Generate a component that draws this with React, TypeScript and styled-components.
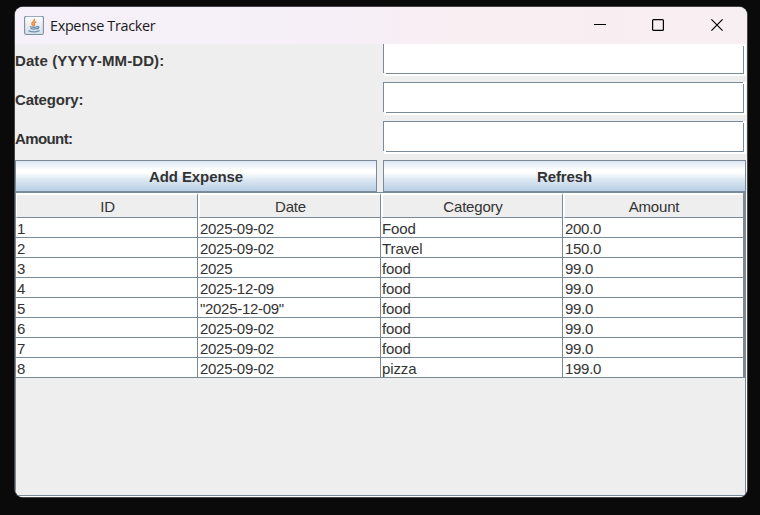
import React from "react";
import styled, { createGlobalStyle } from "styled-components";

const line = "#7a8a99";
const panel = "#eeeeee";
const ink = "#333333";

const GlobalStyle = createGlobalStyle`
  * { box-sizing: border-box; }
  html, body { margin: 0; background: #0a0a0a; overflow: hidden; }
`;

const Desktop = styled.div`
  width: 760px;
  height: 515px;
  padding: 7px 13px 18px 15px;
  background: #0a0a0a;
`;

const Window = styled.main`
  display: flex;
  flex-direction: column;
  width: 732px;
  height: 490px;
  overflow: hidden;
  border-radius: 8px;
  background: ${panel};
  box-shadow: 0 0 0 1px #454548;
  color: ${ink};
  font: 15px "Liberation Sans", Arial, sans-serif;
`;

const TitleBar = styled.header`
  display: flex;
  align-items: center;
  flex: 0 0 37px;
  padding-left: 9px;
  background: linear-gradient(90deg, #f5f0f9 0%, #f6eff7 45%, #f9eef2 60%, #f8eff3 100%);
`;

const Title = styled.h1`
  flex: 1;
  margin: 0 0 0 6px;
  color: #1a1a1a;
  font: 400 14.4px/20px "Open Sans", "Noto Sans", sans-serif;
  letter-spacing: -0.32px;
`;

const WindowControls = styled.div`
  display: flex;
  align-items: center;
  height: 100%;
`;

const ControlButton = styled.button`
  display: grid;
  place-items: center;
  width: 58px;
  height: 37px;
  padding: 0 0 1px;
  border: 0;
  background: transparent;
  &:last-child { width: 60px; }
`;

const Form = styled.form`
  display: grid;
  grid-template: 32px 33px 33px 32px / 362px 363px;
  gap: 6px;
  flex: none;
`;

const Label = styled.label<{ $first?: boolean; $tracking: number }>`
  padding-top: ${(p) => (p.$first ? 8 : 9)}px;
  font-weight: 700;
  line-height: 18px;
  letter-spacing: ${(p) => p.$tracking}px;
`;

const Field = styled.input<{ $clipped?: boolean }>`
  width: 363px;
  height: 100%;
  padding: 0 6px;
  border: 0;
  border-radius: 0;
  outline: 0;
  font: inherit;
  background:
    linear-gradient(${line}, ${line}) 0 0 / 1px calc(100% - 3px) no-repeat,
    linear-gradient(${line}, ${line}) 0 0 / 360px ${(p) => (p.$clipped ? 0 : 1)}px no-repeat,
    linear-gradient(${line}, ${line}) 3px calc(100% - 2px) / 358px 1px no-repeat,
    linear-gradient(${line}, ${line}) 360px 2px / 1px calc(100% - 4px) no-repeat,
    linear-gradient(${panel}, ${panel}) 0 100% / 1px 3px no-repeat,
    #ffffff;
`;

const ActionButton = styled.button`
  height: 32px;
  padding: 2px 0 0;
  border: 1px solid ${line};
  border-radius: 0;
  background: linear-gradient(#dde8f3 0%, #ffffff 30%, #ffffff 38%, #dde8f3 62%, #b8cfe5 100%);
  color: ${ink};
  font: 700 15px/28px "Liberation Sans", Arial, sans-serif;
  letter-spacing: -0.1px;
`;

const ScrollPane = styled.section`
  display: flex;
  flex-direction: column;
  flex: 1;
  width: 731px;
  margin-bottom: 1px;
  border: 1px solid ${line};
  box-shadow: 1px 1px 0 #ffffff;
`;

const Table = styled.div`
  display: flex;
  flex-direction: column;
  border-right: 2px solid ${line};
`;

const HeaderRow = styled.div`
  display: grid;
  grid-template-columns: 182px 183px 182px 180px;
  grid-template-rows: 100%;
  height: 25px;
`;

const HeaderCell = styled.div<{ $first?: boolean }>`
  border-top: 2px solid #ffffff;
  border-left: ${(p) => (p.$first ? 1 : 2)}px solid #ffffff;
  border-right: 1px solid ${line};
  border-bottom: 1px solid ${line};
  background: ${panel};
  padding-left: 1px;
  text-align: center;
  line-height: 24px;
  letter-spacing: -0.2px;
  &:last-child { border-right: 0; padding-left: 0; }
`;

const Row = styled(HeaderRow)`
  height: 20px;
  background: #ffffff;
`;

const Cell = styled.div<{ $inset: number; $tracking: number }>`
  padding-left: ${(p) => p.$inset}px;
  border-right: 1px solid ${line};
  border-bottom: 1px solid ${line};
  line-height: 22px;
  letter-spacing: ${(p) => p.$tracking}px;
  white-space: nowrap;
  &:last-child { border-right: 0; }
`;

const columns = ["ID", "Date", "Category", "Amount"];
const insets = [1, 2, 1, 2];
const tracking = [0, -0.3, -0.1, -0.3];
const expenses = [
  ["1", "2025-09-02", "Food", "200.0"],
  ["2", "2025-09-02", "Travel", "150.0"],
  ["3", "2025", "food", "99.0"],
  ["4", "2025-12-09", "food", "99.0"],
  ["5", '"2025-12-09"', "food", "99.0"],
  ["6", "2025-09-02", "food", "99.0"],
  ["7", "2025-09-02", "food", "99.0"],
  ["8", "2025-09-02", "pizza", "199.0"],
];

function JavaIcon() {
  return (
    <svg width="20" height="20" viewBox="0 0 20 20">
      <defs>
        <linearGradient id="tile" x2="0" y2="1">
          <stop stopColor="#fefefe" />
          <stop offset="1" stopColor="#d5dde5" />
        </linearGradient>
      </defs>
      <rect x=".6" y=".1" width="18.8" height="18.4" rx="1.8" fill="url(#tile)" stroke="#7890a4" strokeWidth="1.1" />
      <g fill="none" strokeLinecap="round">
        <path d="M10.3 3.4c1 1.8-3 2.7-2.4 4.4.2.8.8 1.1 1.1 1.8M11.8 6c-1.9.8-2.5 1.5-1.6 2.3.4.5.3.9-.1 1.3" stroke="#ea8a3a" strokeWidth="1.5" />
        <path d="M6.3 10.7c1.8.7 4.8.7 6.6 0M6.9 12.5c1.6.7 4 .7 5.4 0M13.3 10.7c2.3-.3 1.9 1.6-.2 2.2" stroke="#5886ad" strokeWidth="1.2" />
        <path d="M5 14.9c2.8 1.1 7.2 1.1 10-.1" stroke="#6e93b3" strokeWidth="1.4" />
      </g>
    </svg>
  );
}

export default function App() {
  return (
    <>
      <GlobalStyle />
      <Desktop>
        <Window>
          <TitleBar>
            <JavaIcon />
            <Title>Expense Tracker</Title>
            <WindowControls>
              <ControlButton aria-label="Minimize">
                <svg width="12" height="12"><path d="M0 5.5h12" stroke="#000" /></svg>
              </ControlButton>
              <ControlButton aria-label="Maximize">
                <svg width="12" height="12"><rect x=".6" y=".6" width="10.8" height="10.8" rx="1" fill="none" stroke="#000" strokeWidth="1.2" /></svg>
              </ControlButton>
              <ControlButton aria-label="Close">
                <svg width="12" height="12"><path d="m.4.4 11.2 11.2m0-11.2L.4 11.6" stroke="#000" strokeWidth="1.2" /></svg>
              </ControlButton>
            </WindowControls>
          </TitleBar>
          <Form>
            <Label htmlFor="date" $first $tracking={0.1}>Date (YYYY-MM-DD):</Label>
            <Field id="date" $clipped />
            <Label htmlFor="category" $tracking={-0.2}>Category:</Label>
            <Field id="category" />
            <Label htmlFor="amount" $tracking={-0.6}>Amount:</Label>
            <Field id="amount" />
            <ActionButton type="button">Add Expense</ActionButton>
            <ActionButton type="button">Refresh</ActionButton>
          </Form>
          <ScrollPane>
            <Table>
              <HeaderRow>
                {columns.map((name, i) => (
                  <HeaderCell key={name} $first={i === 0}>{name}</HeaderCell>
                ))}
              </HeaderRow>
              {expenses.map((expense) => (
                <Row key={expense[0]}>
                  {expense.map((value, i) => (
                    <Cell key={i} $inset={insets[i]} $tracking={tracking[i]}>{value}</Cell>
                  ))}
                </Row>
              ))}
            </Table>
          </ScrollPane>
        </Window>
      </Desktop>
    </>
  );
}
